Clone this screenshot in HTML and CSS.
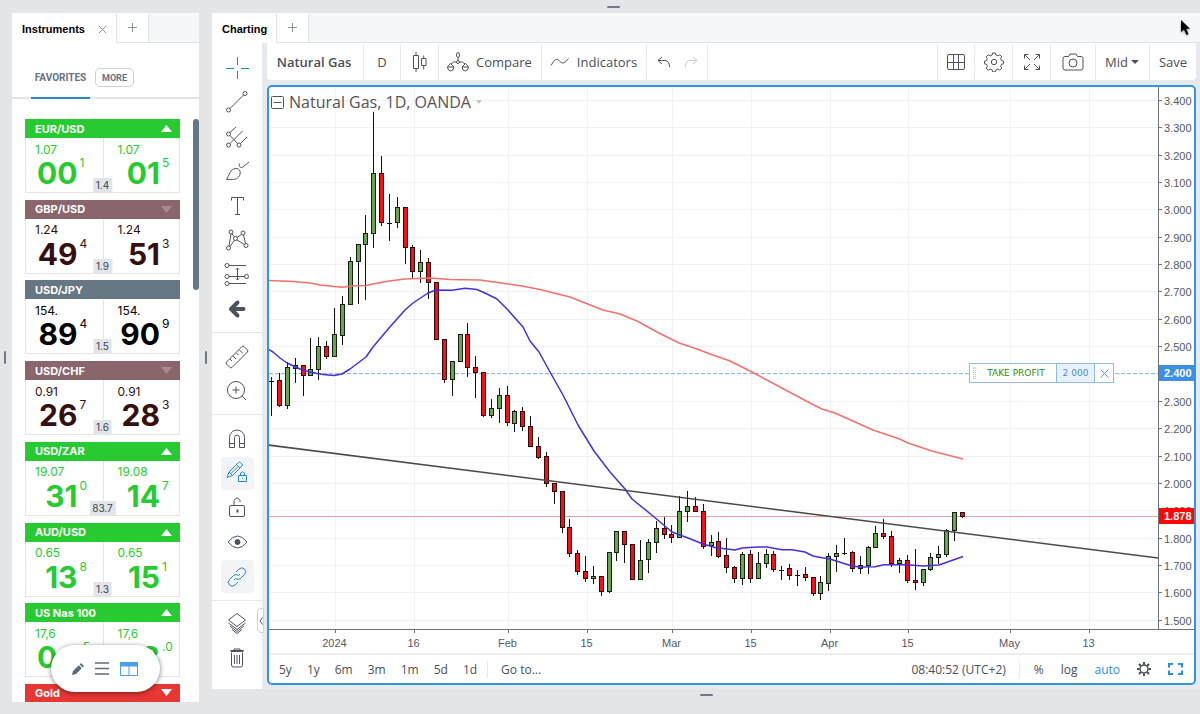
FILE: index.html
```html
<!DOCTYPE html>
<html lang="en">
<head>
<meta charset="utf-8">
<title>Natural Gas – Charting</title>
<link rel="stylesheet" href="styles.css">
</head>
<body>
<div class="workspace">
  <div class="grip grip-h grip-top"></div>
  <div class="grip grip-v grip-left"></div>

  <section class="panel instruments">
    <div class="tabs">
      <button class="tab active">Instruments
        <svg class="tab-close" width="9" height="9" viewBox="0 0 9 9"><path d="M.8.8l7.4 7.4M8.2.8L.8 8.2"/></svg>
      </button>
      <button class="tab-add" aria-label="Add tab"><svg width="9" height="9" viewBox="0 0 9 9"><path d="M4.5 0v9M0 4.5h9"/></svg></button>
      <span class="tabs-rest"></span>
    </div>
    <nav class="lists">
      <button class="list-tab">FAVORITES</button>
      <button class="more">MORE</button>
    </nav>
    <div class="scroll-area">
      <div class="quotes" id="quotes"></div>
      <span class="scroll-thumb"></span>
    </div>
    <div class="view-pill">
      <button aria-label="Edit"><svg width="12" height="12" viewBox="0 0 12 12"><path fill="#5b6b78" d="M0 12l1-4 5.800-5.800 3 3L4 11zM7.600 1.400L9 0l3 3-1.400 1.400z"/></svg></button>
      <button aria-label="List view"><svg width="14" height="13" viewBox="0 0 14 13"><path d="M0 1h14M0 6.500h14M0 12h14" stroke="#5b6b78" stroke-width="1.600"/></svg></button>
      <button aria-label="Tile view"><svg width="18" height="14" viewBox="0 0 18 14"><path fill="none" stroke="#4a9fe8" d="M.5.5h17v13H.5zM9 4v9"/><path fill="#4a9fe8" d="M0 0h18v4.500H0z"/></svg></button>
    </div>
  </section>

  <div class="grip grip-v grip-mid"></div>

  <section class="panel charting">
    <div class="tabs">
      <button class="tab active">Charting</button>
      <button class="tab-add" aria-label="Add tab"><svg width="9" height="9" viewBox="0 0 9 9"><path d="M4.5 0v9M0 4.5h9"/></svg></button>
      <span class="tabs-rest"></span>
    </div>
    <div class="charting-body">
      <aside class="rail">
        <div class="rail-group draw">
          <button class="blue" aria-label="Cross"><svg width="24" height="24" viewBox="0 0 24 24"><path d="M12.500 1v8M12.500 15v8M1 12.500h8M16 12.500h8"/></svg></button>
          <button aria-label="Trend line"><svg width="24" height="24" viewBox="0 0 24 24"><circle cx="3.500" cy="20" r="2"/><circle cx="20" cy="3.500" r="2"/><path d="M5 18.500L18.500 5"/></svg></button>
          <button aria-label="Pitchfork"><svg width="24" height="24" viewBox="0 0 24 24"><circle cx="3.500" cy="9" r="2"/><circle cx="3.500" cy="20" r="2"/><circle cx="14" cy="20" r="2"/><path d="M5 7.500L11 2M5 10.500l7.500 8M5 18.500L17.500 6M15.500 18.500L22 12"/></svg></button>
          <button aria-label="Brush"><svg width="24" height="24" viewBox="0 0 24 24"><path d="M1.500 20.500C4 17 5 10 10.500 9.500c4.500-.3 6.500 4.500 3 8.500-2.500 3-6 2.500-12 2.500zM14.500 4.500c-1 3.500 1.500 5 3.500 3.500l6-5"/></svg></button>
          <button aria-label="Text"><svg width="24" height="24" viewBox="0 0 24 24"><path d="M6.500 6.500v-3h12v3M12.500 3.500v17M10 20.500h5"/></svg></button>
          <button aria-label="Pattern"><svg width="24" height="24" viewBox="0 0 24 24"><circle cx="3.500" cy="20" r="2"/><circle cx="6" cy="4" r="2"/><circle cx="18" cy="5" r="2"/><circle cx="21" cy="17.500" r="2"/><circle cx="10.500" cy="10.500" r="2"/><path d="M4 18L6 6M5 18.500l4.500-6.500M7 6l2.500 3M12 9.500L16.500 6.500M18.500 7l2 8.500M12 12l7.500 4.500"/></svg></button>
          <button aria-label="Projection"><svg width="26" height="24" viewBox="0 0 26 24"><circle cx="3" cy="2.500" r="2"/><circle cx="3" cy="13.500" r="2"/><circle cx="22.500" cy="13.500" r="2"/><circle cx="3" cy="20.500" r="2"/><path d="M5 2.500h17M5 13.500h15.500M5 20.500h17M13.500 5v12M12 6.500L13.500 5 15 6.500M12 15.500l1.500 1.500 1.500-1.500"/></svg></button>
          <button aria-label="Arrow"><svg width="24" height="24" viewBox="0 0 24 24"><path class="fat" d="M18.500 12H6M12.500 5.500L6 12l6.500 6.500"/></svg></button>
        </div>
        <div class="rail-group measure">
          <button aria-label="Measure"><svg width="24" height="24" viewBox="0 0 24 24"><path d="M1.500 17L17 1.500q1-.7 2 0l3.500 3.500q.7 1 0 2L7 22.500q-1 .7-2 0L1.500 19q-.7-1 0-2zM5 14l2 2M8 11l3 3M11.500 8l2 2M14.500 5l3 3"/></svg></button>
          <button aria-label="Zoom in"><svg width="24" height="24" viewBox="0 0 24 24"><circle cx="11" cy="11" r="8.500"/><path d="M17 17l4 4M7.500 11h7M11 7.500v7"/></svg></button>
        </div>
        <div class="rail-group modes">
          <button aria-label="Magnet"><svg width="24" height="24" viewBox="0 0 24 24"><path d="M4.500 20.500V10.500a7.500 7.500 0 0 1 15 0v10h-5v-10a2.500 2.500 0 0 0-5 0v10zM4.500 16.500h5M14.500 16.500h5"/></svg></button>
          <button class="blue on" aria-label="Keep drawing"><svg width="24" height="24" viewBox="0 0 24 24"><path d="M2 16.500l2-5.500L13.500 1.500q1-.8 2 0L17 3q.8 1 0 2L7.500 14.500zM11.500 3.500L15 7M4 11l3.500 3.500M6 12.500l7-7"/><path d="M13.500 14.500h8v6h-8zM15.500 14.500V12q2-2.500 4 0v2.500M17.500 17v1"/></svg></button>
          <button aria-label="Lock"><svg width="24" height="24" viewBox="0 0 24 24"><rect x="4.500" y="9.500" width="15" height="11" rx="1.500"/><path d="M9 9.500V5q3-6 6-.5V6"/><path class="mid" d="M12.500 13.500v3"/></svg></button>
          <button aria-label="Hide drawings"><svg width="24" height="24" viewBox="0 0 24 24"><path d="M3 12q9.500-12 19 0-9.500 12-19 0z"/><circle class="solid" cx="12.500" cy="12" r="2.500"/></svg></button>
          <button class="blue on" aria-label="Link"><svg width="24" height="24" viewBox="0 0 24 24"><path d="M11 7l3-3q3-2.500 5.500 0t0 5.500l-4 4q-2.500 2-5 0M13 17l-3 3q-3 2.500-5.500 0t0-5.500l4-4q2.500-2 5 0M9 15l1.500-1.500M13.500 10.500L15 9"/></svg></button>
        </div>
        <div class="rail-group objects">
          <button aria-label="Object tree"><svg width="24" height="24" viewBox="0 0 24 24"><path d="M3.500 9L12 2.500 20.500 9 12 15.500zM3.500 12l8.500 6.500 8.500-6.500M5 15l7 5.500 7-5.500M7 18.500l5 4 5-4"/></svg></button>
          <button aria-label="Delete"><svg width="24" height="24" viewBox="0 0 24 24"><path d="M6.500 6.500V19q0 2 2 2h7q2 0 2-2V6.500M9.500 9v9M12 9v9M14.500 9v9M9 4V3h6v1"/><path class="mid" d="M5.500 5h13"/></svg></button>
        </div>
        <button class="collapse" aria-label="Collapse"><svg width="4" height="8" viewBox="0 0 4 8"><path d="M3.500.5L1 4l2.500 3.500"/></svg></button>
      </aside>

      <main class="chart-col">
        <div class="toolbar">
          <button class="symbol">Natural Gas</button>
          <button class="interval">D</button>
          <button class="tool" aria-label="Candles"><svg width="14" height="20" viewBox="0 0 14 20"><path d="M.5 3.500h5v13h-5zM3 0v3.500M3 16.500V20M8.500 6.500h4.500v7H8.500zM10.700 3.500v3M10.700 13.500v4"/></svg></button>
          <button class="labelled"><svg width="22" height="20" viewBox="1 0 22 20"><path d="M12 5.500v3M5 12q2-3 5.500-2M19 12q-2-3-5.500-2M1.500 15l3-3.500 3.500 3.500M16 15l3.500-3.500 3 3.500"/><path d="M1.500 15h6.500q-.5 4-3.300 4t-3.200-4zM16 15h6.500q-.5 4-3.300 4t-3.200-4z"/><circle cx="12" cy="10" r="1.500"/><ellipse cx="12" cy="3" rx="1.500" ry="2.500"/></svg>Compare</button>
          <button class="labelled"><svg width="20" height="10" viewBox="0 0 20 10"><path d="M1 8.500Q6-1 9.500 4t9-2.500"/></svg>Indicators</button>
          <div class="history">
            <button aria-label="Undo"><svg width="14" height="12" viewBox="0 0 14 12"><path d="M5 1L1 4.500 5 8M1 4.500h7q4.500 0 4.500 6.500"/></svg></button>
            <button class="off" aria-label="Redo"><svg width="14" height="12" viewBox="0 0 14 12"><path d="M9 1l4 3.500L9 8M13 4.500H6Q1.500 4.500 1.500 11"/></svg></button>
          </div>
          <span class="spring"></span>
          <button class="tool edge" aria-label="Layout"><svg width="20" height="18" viewBox="0 0 20 18"><rect x="1.500" y="1.500" width="17" height="15" rx="1.500"/><path d="M7.500 1.500v15M12.500 1.500v15M1.500 9.500h17"/></svg></button>
          <button class="tool" aria-label="Settings"><svg width="20" height="20" viewBox="0 0 20 20"><circle cx="10" cy="10" r="2.700"/><path d="M8.600 1h2.800l.5 2 2 .9 1.900-1.100 2 2-1.200 1.900.9 2 2 .4v2.700l-2 .5-.9 2 1.200 1.900-2 2-1.900-1.200-2 .9-.5 2H8.600l-.5-2-2-.9-1.900 1.200-2-2 1.100-1.900-.8-2-2-.5V9.100l2-.4.8-2-1.100-1.900 2-2 1.900 1.100 2-.9z"/></svg></button>
          <button class="tool" aria-label="Full screen"><svg width="16" height="16" viewBox="0 0 16 16"><path d="M.5 4.500v-4h4M.5.5L6 6M11.500.5h4v4M15.500.5L10 6M.5 11.500v4h4M.5 15.500L6 10M15.500 11.500v4h-4M15.500 15.500L10 10"/></svg></button>
          <button class="tool wide" aria-label="Snapshot"><svg width="22" height="18" viewBox="0 0 22 18"><path d="M3 3.500h3.500L8 1h6l1.500 2.500H19q2 0 2 2V15q0 2-2 2H3q-2 0-2-2V5.500q0-2 2-2z"/><circle cx="11" cy="10" r="4"/></svg></button>
          <div class="price-mode"><select aria-label="Price type"><option>Mid</option><option>Bid</option><option>Ask</option></select></div>
          <button class="save">Save</button>
        </div>

        <div class="frame">
          <div class="plot-row">
            <div class="plot">
              <svg class="plot-svg" id="plot" width="100%" height="100%"></svg>
              <div class="legend">
                <button aria-label="Collapse legend"><svg width="13" height="13" viewBox="0 0 13 13"><rect x=".5" y=".5" width="12" height="12" rx="1"/><path d="M2.500 6.500h8"/></svg></button>
                <h1>Natural Gas, 1D, OANDA</h1>
                <svg width="6" height="4" viewBox="0 0 6 4"><path class="arrow" d="M0 0h6L3 4z"/></svg>
              </div>
              <div class="order">
                <span class="drag"></span>
                <span class="order-kind">TAKE PROFIT</span>
                <span class="order-qty">2 000</span>
                <button aria-label="Cancel order"><svg width="9" height="9" viewBox="0 0 9 9"><path d="M.5.5l8 8M8.500.5l-8 8"/></svg></button>
              </div>
            </div>
            <svg class="price-axis" id="prices" width="35" height="100%"></svg>
          </div>
          <svg class="time-axis" id="times" width="100%" height="23"></svg>
          <footer class="range-bar">
            <div class="ranges">
              <button>5y</button><button>1y</button><button>6m</button><button>3m</button><button>1m</button><button>5d</button><button>1d</button>
            </div>
            <button class="goto">Go to...</button>
            <span class="spring"></span>
            <span class="clock">08:40:52 (UTC+2)</span>
            <div class="scale-modes">
              <button class="percent">%</button>
              <button>log</button>
              <button class="auto">auto</button>
              <button aria-label="Chart settings"><svg width="14" height="14" viewBox="0 0 14 14"><circle cx="7" cy="7" r="4" fill="none" stroke="#4a4f58" stroke-width="1.500"/><path stroke="#4a4f58" stroke-width="2" d="M7 0v2.500M7 11.500V14M0 7h2.500M11.500 7H14M2 2l2 2M10 10l2 2M12 2l-2 2M4 10l-2 2"/></svg></button>
              <button aria-label="Maximize"><svg width="15" height="12" viewBox="0 0 15 12"><path fill="none" stroke="#2a8fe0" stroke-width="2" d="M1 4.500V1h4M10 1h4v3.500M14 7.500V11h-4M5 11H1V7.500"/></svg></button>
            </div>
          </footer>
        </div>
      </main>
    </div>
  </section>
  <div class="grip grip-h grip-bottom"></div>
  <svg class="pointer" width="12" height="17" viewBox="0 0 12 17"><path d="M1 1v12l3-2.500L6.500 16l2-1L6.200 9.700H10z"/></svg>
</div>
<script src="chart.js"></script>
</body>
</html>
```
FILE: styles.css
```css
* { box-sizing: border-box; }
body {
  margin: 0;
  background: #e4e5e7;
  color: #4a4f58;
  font-family: Inter, "Liberation Sans", sans-serif;
}
button, select { font: inherit; color: inherit; background: none; border: 0; padding: 0; margin: 0; }
button { display: flex; align-items: center; justify-content: center; white-space: nowrap; }
svg { display: block; flex: none; }

.workspace {
  display: grid;
  grid-template: 13px minmax(660px, 1fr) 12px / 12px 187px 13px minmax(760px, 1fr);
  min-height: 100vh;
  position: relative;
}
.grip { background: #707a85; border-radius: 1px; place-self: center; }
.grip-h { width: 13px; height: 2px; }
.grip-v { width: 2px; height: 13px; }
.grip-top { grid-area: 1 / 1 / 2 / 5; margin-left: 26px; }
.grip-left { grid-area: 2 / 1; margin-right: 3px; }
.grip-mid { grid-area: 2 / 3; }
.grip-bottom { grid-area: 2 / 4 / 4 / 5; align-self: end; margin-bottom: 18px; }
.instruments { grid-area: 2 / 2; }
.charting { grid-area: 2 / 4; margin-bottom: 13px; }
.panel { background: #fff; display: flex; flex-direction: column; position: relative; min-width: 0; }

.tabs { display: flex; height: 30px; flex: none; }
.tab { padding: 2px 9px 0 10px; gap: 13px; color: #000; font-family: "Liberation Sans", Arial, sans-serif; font-size: 11px; font-weight: 700; }
.tab svg, .tab-add svg { stroke: #8a9097; stroke-width: 1; }
.tab-add { width: 33px; border: solid #dfe3e7; border-width: 0 1px 1px; }
.tabs-rest { flex: 1; background: #f6f7f9; border-bottom: 1px solid #dfe3e7; }

.lists { display: flex; align-items: flex-end; height: 56px; border-bottom: 2px solid #e3e5e8; padding-left: 19px; gap: 5px; flex: none; color: #667380; font-family: Roboto, sans-serif; font-weight: 700; }
.list-tab { height: 41px; width: 59px; border-bottom: 2px solid #2a86cc; margin-bottom: -2px; font-size: 10px; }
.more { width: 39px; height: 19px; margin-bottom: 10px; border: 1px solid #ccd0d6; border-radius: 5px; font-size: 9px; }

.scroll-area { display: flex; flex: 1; padding: 20px 0 0 13px; gap: 13px; }
.scroll-thumb { width: 6px; height: 171px; background: #677683; border-radius: 3px; }
.quotes { width: 155px; display: flex; flex-direction: column; justify-content: space-between; }
.quote header { display: flex; align-items: center; justify-content: space-between; height: 19px; padding: 0 8px 0 10px; color: #fff; font-size: 11px; font-weight: 700; background: var(--head); }
.quote.drop header { height: 18px; }
.quote { color: var(--ink); position: relative; }
.quote .sides { display: grid; grid-template-columns: 1fr 1fr; height: 55px; border: 1px solid #e3e5e8; border-top: 0; }
.side { display: grid; grid-template: 19px 1fr / 1fr 8px; padding: 2px 15px 0 9px; column-gap: 2px; }
.side + .side { border-left: 1px solid #e3e5e8; padding: 2px 9px 0 14px; }
.handle { grid-column: 1 / 3; align-self: center; font-size: 12px; line-height: 14px; }
.pips { font-size: 30px; line-height: 28px; font-weight: 700; text-align: right; white-space: nowrap; justify-self: end; }
.tenth { font-size: 12px; line-height: 8px; }
.spread { position: absolute; left: 50%; bottom: 0; transform: translateX(-50%); padding: 0 3px; background: #e1e4e8; color: #3a4652; font-size: 10px; line-height: 15px; }
.rise { --head: #27cb31; --ink: #27cb31; }
.fall { --head: #8a666c; --ink: #351011; }
.flat { --head: #677683; --ink: #000; }
.drop { --head: #e63735; --ink: #e63735; }
.dir { fill: #fff; }
.fall .dir { fill: #a98990; }

.view-pill { position: absolute; left: 39px; bottom: 10px; width: 109px; height: 47px; padding: 0 22px 0 21px; display: flex; align-items: center; justify-content: space-between; background: #fff; border-radius: 24px; box-shadow: 0 1px 5px rgba(0, 0, 0, .5); }

.charting-body { display: flex; flex: 1; background: #e6e9ee; }
.rail { width: 50px; background: #fff; position: relative; flex: none; display: flex; flex-direction: column; }
.rail svg { fill: none; stroke: #4d525c; stroke-width: 1; }
.rail .blue svg { stroke: #2a86cc; }
.rail .mid { stroke-width: 2; }
.rail .fat { stroke-width: 4; stroke-linecap: round; stroke-linejoin: round; }
.rail .solid { fill: #4d525c; }
.rail-group { display: flex; flex-direction: column; align-items: center; justify-content: space-between; border-bottom: 1px solid #e3e6ea; }
.rail-group button { width: 33px; height: 33px; border-radius: 4px; }
.rail-group .on { background: #f2f4f7; }
.draw { height: 290px; padding: 8px 0 6px; }
.measure { height: 82px; padding: 7px 0; }
.modes { height: 186px; padding: 7px 0; }
.objects { height: 80px; padding: 5px 0 7px; border: 0; }
.collapse { position: absolute; right: -2px; top: 565px; width: 7px; height: 25px; background: #fff; border: 1px solid #cdd2dc; border-radius: 4px 0 0 4px; }

.chart-col { flex: 1; min-width: 0; padding: 0 4px 4px 5px; display: flex; flex-direction: column; gap: 5px; font-family: "Open Sans", sans-serif; }
.toolbar { display: flex; height: 37px; padding-top: 1px; background: #fff; border-radius: 0 0 4px 4px; font-size: 13px; flex: none; }
.toolbar > button, .history, .price-mode { border-right: 1px solid #e8eaed; }
.toolbar svg, .legend svg { fill: none; stroke: #4d525c; stroke-width: 1; }
.symbol { width: 97px; padding-right: 2px; font-weight: 600; }
.interval { width: 37px; }
.tool { width: 38px; }
.toolbar .edge { border-left: 1px solid #e8eaed; }
.toolbar .wide { width: 45px; }
.labelled { padding: 0 9px 0 8px; gap: 7px; }
.history { display: flex; gap: 13px; padding: 0 9px 0 10px; }
.history .off { opacity: .3; }
.spring { flex: 1; }
.price-mode { position: relative; display: flex; width: 54px; }
.price-mode select { appearance: none; width: 100%; padding-left: 9px; }
.price-mode::after { content: ""; position: absolute; right: 10px; top: 16px; border: 4px solid transparent; border-top-color: #4d525c; border-bottom: 0; pointer-events: none; }
.toolbar .save { width: 46px; border: 0; }

.frame { flex: 1; display: flex; flex-direction: column; background: #fff; border: 2px solid #3595da; border-radius: 5px; overflow: hidden; }
.plot-row { flex: 1; display: flex; border-bottom: 1px solid #6f7378; }
.plot { flex: 1; position: relative; border-right: 1px solid #6f7378; min-width: 0; }
.plot-svg { position: absolute; inset: 0; }
.grid-line { stroke: #edf3f8; }
.average { fill: none; stroke-width: 1.5; stroke-linejoin: round; }
.slow { stroke: #f2706c; }
.fast { stroke: #4430d8; }
.trend { stroke: #4a4a4a; stroke-width: 1.5; }
.target { stroke: #8dbce0; stroke-dasharray: 4 2; }
.last { stroke: #eba0a4; }
.wick { stroke: #111; }
.up { fill: #6aa450; stroke: #142010; }
.down { fill: #f3101a; stroke: #300808; }
.price-axis text, .time-axis text { font: 11px "Liberation Sans", Arial, sans-serif; fill: #55585e; }
.price-axis .tag { fill: #fff; font-weight: 700; }
.tick { stroke: #6f7378; }
.time-axis text { text-anchor: middle; }

.legend { position: absolute; left: 2px; top: 5px; display: flex; align-items: center; gap: 5px; }
.legend h1 { margin: 0; font-size: 16px; line-height: 20px; font-weight: 400; color: #555; }
.legend .arrow { fill: #c2c5ca; stroke: none; }
.order { position: absolute; right: 44px; top: 276px; height: 20px; display: flex; align-items: stretch; background: #fff; border: 1px solid #8fbbe6; font: 9px/18px "DejaVu Sans", Verdana, sans-serif; white-space: nowrap; }
.drag { width: 3px; margin: 3px 0 3px 3px; border: dotted #a9c9e8; border-width: 0 1px; }
.order-kind { width: 80px; text-align: center; color: #2f8a0c; }
.order-qty { width: 39px; text-align: center; background: #e8f2fc; color: #4a8ccc; border: solid #8fbbe6; border-width: 0 1px; }
.order button { width: 18px; }
.order svg { stroke: #5a98d6; }

.range-bar { display: flex; align-items: center; height: 30px; border-top: 2px solid #ebedef; font-size: 12px; flex: none; }
.ranges { display: flex; gap: 15px; padding: 0 10px; border-right: 1px solid #e8eaed; }
.goto { padding-left: 13px; }
.clock { padding-right: 13px; border-right: 1px solid #e8eaed; }
.scale-modes { display: flex; align-items: center; gap: 17px; padding: 0 11px 0 14px; }
.auto { color: #2a8fe0; }

.pointer { position: absolute; right: 8px; top: 19px; filter: drop-shadow(0 1px 1px rgba(0, 0, 0, .4)); }
```
FILE: chart.js
```js
const quotes = [
  ['EUR/USD', 'rise', '1.4', ['1.07', '00', '1'], ['1.07', '01', '5']],
  ['GBP/USD', 'fall', '1.9', ['1.24', '49', '4'], ['1.24', '51', '3']],
  ['USD/JPY', 'flat', '1.5', ['154.', '89', '4'], ['154.', '90', '9']],
  ['USD/CHF', 'fall', '1.6', ['0.91', '26', '7'], ['0.91', '28', '3']],
  ['USD/ZAR', 'rise', '83.7', ['19.07', '31', '0'], ['19.08', '14', '7']],
  ['AUD/USD', 'rise', '1.3', ['0.65', '13', '8'], ['0.65', '15', '1']],
  ['US Nas 100', 'rise', '', ['17,6', '04', '.5'], ['17,6', '08', '.0']],
  ['Gold', 'drop', '', null, null],
];
const arrows = { rise: 'M0 7h11L5.500 0z', fall: 'M0 0h11L5.500 7z', drop: 'M0 0h11L5.500 7z' };
const side = ([handle, pips, tenth]) =>
  `<div class="side"><span class="handle">${handle}</span><span class="pips">${pips}</span><span class="tenth">${tenth}</span></div>`;
document.getElementById('quotes').innerHTML = quotes.map(([name, dir, spread, bid, ask]) => `
  <article class="quote ${dir}">
    <header>${name}${arrows[dir] ? `<svg class="dir" width="11" height="7"><path d="${arrows[dir]}"/></svg>` : ''}</header>
    ${bid ? `<div class="sides">${side(bid)}${side(ask)}</div>` : ''}
    ${spread ? `<span class="spread">${spread}</span>` : ''}
  </article>`).join('');

// Candles: high, body top, body bottom, low in thirds of a pixel below each block's top.
const blocks = [
  [23, [
    [800,812,812,917,0],[790,813,887,892,-1],[757,775,889,896,1],[745,767,776,820,1],[765,767,799,857,-1],
    [685,781,799,799,1],[680,712,781,810,1],[693,712,741,746,-1],[593,676,741,741,1],[558,585,677,704,1],
    [440,455,585,585,1],[406,406,455,583,1],[315,371,406,571,1],[5,193,373,415,1],[137,193,340,347,-1],
    [253,340,340,392,0],[262,293,340,355,1],[293,293,415,461,-1],[406,415,487,508,-1],[421,458,487,519,1],
    [444,458,518,566,-1],[519,519,691,691,-1],[691,691,810,819,-1],[757,757,810,857,1],[676,676,757,757,1],
    [640,676,775,800,-1],[737,775,790,863,-1]]],
  [223, [
    [190,190,317,322,-1],[267,296,317,325,1],[235,259,296,338,1],[229,259,340,348,-1],[299,307,341,366,1],
    [290,307,352,362,-1],[318,352,412,412,-1],[380,412,443,448,-1],[426,442,521,532,-1],[521,521,547,583,-1],
    [547,547,653,668,-1],[628,653,731,740,-1],[720,731,787,796,-1],[737,787,806,815,-1],[768,801,807,821,1],
    [800,802,847,859,-1],[730,730,847,850,1],[662,665,728,752,1],[665,665,706,758,-1],[706,706,811,811,-1],
    [690,752,811,811,1],[688,700,751,788,1],[632,656,700,730,1],[622,656,674,688,-1],[645,674,685,700,-1],
    [559,607,685,685,1],[542,590,607,635,1],[560,590,605,607,-1],[582,605,710,718,-1]]],
  [343, [
    [316,338,349,378,1],[307,337,380,384,-1],[324,379,415,428,-1],[408,415,446,458,-1],[366,374,446,464,1],
    [360,374,446,458,-1],[366,403,447,447,1],[357,374,403,413,1],[364,374,421,425,-1],[408,419,419,450,0],
    [402,418,437,450,-1],[420,436,436,467,0],[411,436,444,452,-1],[440,443,493,499,-1],[437,460,493,511,1],
    [370,380,461,482,1],[345,372,380,425,1],[324,370,370,375,0],[364,369,418,425,-1],[378,409,418,432,1],
    [349,354,409,431,1],[288,313,355,355,1],[267,313,322,326,-1],[304,322,403,412,-1],[385,394,403,428,1],
    [374,394,452,458,-1],[356,452,458,479,-1],[418,421,458,467,1],[368,385,421,424,1],[348,374,385,402,1],
    [298,302,374,380,1],[246,250,302,334,1],[250,250,260,265,-1]]],
];
const originX = 269, originY = 87;
const line = pts => pts.map(([x, y]) => `${x - originX},${y - originY}`).join(' ');
const slow = [[268,280.5],[293,281.5],[310,283],[320,285],[342,287.3],[352,286],[366,285.5],[373,284],[389,281],[405,279],[430,278],[450,279.5],[480,280],[505,283.5],[522,286],[540,289.5],[570,297],[603,310],[620,314],[637,321],[657,332],[679,343],[697,349],[710,354],[730,361],[750,371],[780,387],[810,403],[822,409],[835,413],[873,430],[899,438.7],[908,443],[932,451],[963,459]];
const fast = [[268,349],[273,352],[280,358],[287,363],[300,369],[310,372],[323,374.5],[334,375.5],[342,374],[350,369],[366,357],[373,347],[389,328],[405,310],[413,303],[428,293],[436,290],[452,290.3],[465,288.3],[477,289.5],[487,294],[497,299],[508,310],[523,327],[530,341],[539,352],[550,372],[563,395],[578,425],[594,451],[610,472],[625,489],[632,499],[653,516],[672,532],[688,538],[703,544],[715,547.5],[735,550],[742,548],[758,547],[767,547],[782,549.7],[792,549.7],[805,552],[813,556],[822,557.7],[829,558.7],[852,566],[860,567],[875,566.7],[884,564.7],[907,564.7],[923,566],[939,565],[963,556.5]];
const dates = [[335,'2024'],[414,'16'],[508,'Feb'],[587,'15'],[672,'Mar'],[751,'15'],[830,'Apr'],[908,'15'],[1010,'May'],[1089,'13']];

let plot = '', prices = '', times = '';
for (let i = 0; i < 20; i++) {
  const y = Math.round(13 + i * 27.35) + 0.5;
  plot += `<line class="grid-line" x1="0" x2="100%" y1="${y}" y2="${y}"/>`;
  prices += `<line class="tick" x1="0" x2="3" y1="${y}" y2="${y}"/>`;
  prices += `<text x="5" y="${y + 4}">${(3.4 - i * 0.1).toFixed(3)}</text>`;
}
for (const [date, label] of dates) {
  const x = date - originX + 0.5;
  plot += `<line class="grid-line" y1="0" y2="100%" x1="${x}" x2="${x}"/>`;
  times += `<line class="tick" x1="${x}" x2="${x}" y1="0" y2="3"/><text x="${x - 1}" y="17">${label}</text>`;
}
plot += '<line class="target" x1="0" x2="100%" y1="286.5" y2="286.5"/>';
plot += '<line class="last" x1="0" x2="100%" y1="429.5" y2="429.5"/>';
let n = 0;
let candles = '';
for (const [base, rows] of blocks) {
  for (const [high, open, close, low, dir] of rows) {
    const x = Math.round(2.2 + n++ * 7.847) + 0.5;
    const [h, a, b, l] = [high, open, close, low].map(v => Math.round(base + v / 3));
    candles += `<line class="wick" x1="${x}" x2="${x}" y1="${h}" y2="${l}"/>`;
    candles += dir
      ? `<rect class="${dir > 0 ? 'up' : 'down'}" x="${x - 2}" y="${a - 0.5}" width="4" height="${Math.max(1, b - a)}"/>`
      : `<line class="wick" x1="${x - 2.5}" x2="${x + 2.5}" y1="${a + 0.5}" y2="${a + 0.5}"/>`;
  }
}
plot += candles;
plot += `<polyline class="average slow" points="${line(slow)}"/><polyline class="average fast" points="${line(fast)}"/>`;
plot += '<line class="trend" x1="-1" y1="358" x2="889" y2="471"/>';
prices += '<rect y="278" width="35" height="16" fill="#3d8fe6"/><text class="tag" x="5" y="290">2.400</text>';
prices += '<rect y="421" width="35" height="16" fill="#fa0808"/><text class="tag" x="5" y="433">1.878</text>';
document.getElementById('plot').innerHTML = plot;
document.getElementById('prices').innerHTML = prices;
document.getElementById('times').innerHTML = times;
```
